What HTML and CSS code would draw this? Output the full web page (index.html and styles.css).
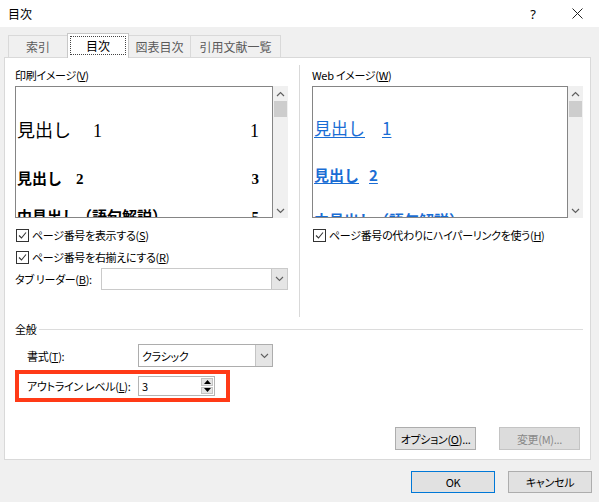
FILE: index.html
```html
<!DOCTYPE html>
<html lang="ja">
<head>
<meta charset="utf-8">
<title>目次</title>
<link rel="stylesheet" href="styles.css">
</head>
<body>
<div class="dialog">
  <div class="titlebar">
    <span class="title">目次</span>
    <span class="help">?</span>
    <span class="close"><svg width="11" height="11" viewBox="0 0 11 11"><path d="M0.5 0.5L10.5 10.5M10.5 0.5L0.5 10.5" stroke="#222" stroke-width="1" fill="none"/></svg></span>
  </div>

  <div class="tabs">
    <div class="tab t1">索引</div>
    <div class="tab t2 sel"><span class="focus">目次</span></div>
    <div class="tab t3">図表目次</div>
    <div class="tab t4">引用文献一覧</div>
  </div>

  <div class="panel">
    <div class="top">
      <div class="col col-left">
        <div class="label">印刷イメージ(<u>V</u>)</div>
        <div class="preview">
          <div class="pbox print">
            <div class="pl l1"><span>見出し<span class="gap"></span>1</span><span>1</span></div>
            <div class="pl l2"><span>見出し<span class="gap2"></span>2</span><span>3</span></div>
            <div class="pl l3"><span>中見出し（語句解説）</span><span>5</span></div>
          </div>
          <div class="sbar">
            <span class="arrow"><svg width="9" height="6" viewBox="0 0 9 6"><path d="M1 5L4.5 1.5L8 5" stroke="#606060" stroke-width="1.2" fill="none"/></svg></span>
            <span class="thumb"></span>
            <span class="sfill"></span>
            <span class="arrow"><svg width="9" height="6" viewBox="0 0 9 6"><path d="M1 1L4.5 4.5L8 1" stroke="#606060" stroke-width="1.2" fill="none"/></svg></span>
          </div>
        </div>
        <div class="chk-row first"><span class="cb"><svg width="11" height="11" viewBox="0 0 11 11"><path d="M2 5.5L4.5 8L9 2.5" stroke="#333" stroke-width="1.1" fill="none"/></svg></span>ページ番号を表示する(<u>S</u>)</div>
        <div class="chk-row"><span class="cb"><svg width="11" height="11" viewBox="0 0 11 11"><path d="M2 5.5L4.5 8L9 2.5" stroke="#333" stroke-width="1.1" fill="none"/></svg></span>ページ番号を右揃えにする(<u>R</u>)</div>
        <div class="leader-row">
          <span class="leader-label">タブ リーダー(<u>B</u>):</span>
          <span class="combo leader"><span class="val"></span><span class="dd"><svg width="9" height="6" viewBox="0 0 9 6"><path d="M1 1L4.5 4.5L8 1" stroke="#606060" stroke-width="1.1" fill="none"/></svg></span></span>
        </div>
      </div>
      <div class="vsep"></div>
      <div class="col col-right">
        <div class="label">Web イメージ(<u>W</u>)</div>
        <div class="preview">
          <div class="pbox web">
            <div class="wl l1"><span class="link">見出し<span class="gap"></span>1</span></div>
            <div class="wl l2"><span class="link">見出し<span class="gap2"></span>2</span></div>
            <div class="wl l3"><span class="link">中見出し（語句解説）</span></div>
          </div>
          <div class="sbar">
            <span class="arrow"><svg width="9" height="6" viewBox="0 0 9 6"><path d="M1 5L4.5 1.5L8 5" stroke="#606060" stroke-width="1.2" fill="none"/></svg></span>
            <span class="thumb"></span>
            <span class="sfill"></span>
            <span class="arrow"><svg width="9" height="6" viewBox="0 0 9 6"><path d="M1 1L4.5 4.5L8 1" stroke="#606060" stroke-width="1.2" fill="none"/></svg></span>
          </div>
        </div>
        <div class="chk-row first"><span class="cb"><svg width="11" height="11" viewBox="0 0 11 11"><path d="M2 5.5L4.5 8L9 2.5" stroke="#333" stroke-width="1.1" fill="none"/></svg></span>ページ番号の代わりにハイパーリンクを使う(<u>H</u>)</div>
      </div>
    </div>

    <div class="group-head"><span>全般</span><span class="line"></span></div>

    <div class="row-format">
      <span class="flabel">書式(<u>T</u>):</span>
      <span class="combo fmt"><span class="val">クラシック</span><span class="dd"><svg width="9" height="6" viewBox="0 0 9 6"><path d="M1 1L4.5 4.5L8 1" stroke="#606060" stroke-width="1.1" fill="none"/></svg></span></span>
    </div>

    <div class="highlight">
      <span class="flabel">アウトライン レベル(<u>L</u>):</span>
      <span class="spinner"><span class="val">3</span><span class="spin"><span class="sb"><svg width="7" height="4" viewBox="0 0 7 4"><path d="M0 4L3.5 0L7 4Z" fill="#000"/></svg></span><span class="sb"><svg width="7" height="4" viewBox="0 0 7 4"><path d="M0 0L3.5 4L7 0Z" fill="#000"/></svg></span></span></span>
    </div>

    <div class="actions">
      <span class="btn">オプション(<u>O</u>)...</span>
      <span class="btn disabled">変更(M)...</span>
    </div>
  </div>

  <div class="footer">
    <span class="btn fbtn ok">OK</span>
    <span class="btn fbtn">キャンセル</span>
  </div>
</div>
</body>
</html>
```

FILE: styles.css
```css
* { box-sizing: border-box; }
html, body { margin: 0; padding: 0; }
body {
  width: 599px;
  height: 502px;
  overflow: hidden;
  background: #f0f0f0;
  font-family: "Noto Sans CJK JP", "Noto Sans", sans-serif;
  font-size: 11px;
  letter-spacing: -0.3px;
  color: #000;
  font-feature-settings: "palt";
}
u { text-decoration: underline; text-underline-offset: 1px; }

.dialog { width: 599px; height: 502px; display: flex; flex-direction: column; }

.titlebar {
  height: 27px; flex-shrink: 0; background: #fff;
  display: flex; align-items: center; padding: 0 12px 0 8px;
}
.title { flex: 1; font-size: 12px; letter-spacing: 0; }
.help { width: 20px; text-align: center; margin-right: 24px; font-size: 13px; font-family: "Noto Sans", sans-serif; }
.close { width: 20px; display: flex; justify-content: center; }

.tabs { height: 30px; flex-shrink: 0; display: flex; align-items: flex-end; padding-left: 8px; }
.tab {
  height: 22px; border: 1px solid #d9d9d9; border-bottom: none;
  display: flex; align-items: center; justify-content: center;
  color: #5a5a5a; margin-left: -1px; font-size: 12px; letter-spacing: 0;
}
.t1 { width: 60px; margin-left: 0; }
.t2 { width: 62px; }
.t3 { width: 63px; }
.t4 { width: 91px; }
.tab.sel {
  height: 25px; background: #fff; color: #000; margin-bottom: -1px;
  position: relative; z-index: 1; padding: 2px 2px 3px; border-color: #c8c8c8;
}
.tab.sel .focus {
  flex: 1; align-self: stretch; border: 1px dotted #444;
  display: flex; align-items: center; justify-content: center;
}

.panel {
  margin-left: 4px; width: 587px; height: 403px; flex-shrink: 0;
  background: #fff; border: 1px solid #d9d9d9;
  display: flex; flex-direction: column;
}
.top { height: 260px; display: flex; flex-shrink: 0; }
.col-left { width: 294px; padding: 10px 11px 0 10px; }
.col-right { flex: 1; padding: 10px 7px 0 12px; }
.vsep { width: 1px; background: #d9d9d9; margin-top: 7px; height: 252px; }

.label { height: 14px; line-height: 14px; margin-bottom: 4px; white-space: nowrap; }

.preview { display: flex; height: 132px; }
.pbox { flex: 1; border: 1px solid #858585; overflow: hidden; background: #fff; letter-spacing: 0; }
.sbar { width: 15px; background: #f0f0f0; display: flex; flex-direction: column; align-items: center; }
.sbar .arrow { height: 15px; display: flex; align-items: center; justify-content: center; }
.sbar .thumb { width: 13px; height: 16px; background: #cdcdcd; }
.sbar .sfill { flex: 1; }

.print { font-family: "Liberation Serif", "Noto Sans CJK JP", serif; padding: 0 13px 0 1px; font-feature-settings: normal; }
.pl { display: flex; justify-content: space-between; white-space: nowrap; }
.print .l1 { margin-top: 33px; height: 22px; line-height: 22px; font-size: 18px; }
.print .l2 { margin-top: 27px; height: 20px; line-height: 20px; font-size: 15px; font-weight: bold; }
.print .l3 { margin-top: 19px; height: 18px; line-height: 18px; font-size: 15px; font-weight: bold; }
.gap { display: inline-block; width: 22px; }
.gap2 { display: inline-block; width: 14px; }

.web { font-family: "Noto Sans CJK JP", sans-serif; padding-left: 1px; color: #1a6dd4; font-feature-settings: normal; }
.wl { white-space: nowrap; }
.link { text-decoration: underline; text-underline-offset: 2px; text-decoration-thickness: 1px; }
.web .l1 { margin-top: 31px; height: 20px; line-height: 20px; font-size: 17px; }
.web .l1 .gap { width: 17px; }
.web .l2 { margin-top: 28px; height: 18px; line-height: 18px; font-size: 15px; font-weight: bold; }
.web .l2 .gap2 { width: 10px; }
.web .l3 { margin-top: 27px; height: 17px; line-height: 17px; font-size: 15px; font-weight: bold; }

.chk-row { height: 22px; display: flex; align-items: center; white-space: nowrap; }
.chk-row.first { margin-top: 6px; }
.cb {
  width: 13px; height: 13px; border: 1px solid #333; margin: 0 3px 0 1px;
  display: flex; align-items: center; justify-content: center; background: #fff; flex-shrink: 0;
}

.leader-row { height: 22px; display: flex; align-items: center; }
.leader-label { width: 86px; flex-shrink: 0; white-space: nowrap; }
.combo { height: 22px; display: flex; border: 1px solid #b4b4b4; background: #fff; }
.combo .val { flex: 1; padding-left: 3px; display: flex; align-items: center; }
.combo .dd {
  width: 16px; background: #e5e5e5; border-left: 1px solid #c4c4c4;
  display: flex; align-items: center; justify-content: center;
}
.leader { flex: 1; border-color: #cacaca; }

.group-head { height: 22px; display: flex; align-items: center; padding-left: 10px; flex-shrink: 0; }
.group-head .line { flex: 1; height: 1px; background: #dcdcdc; margin: 0 7px 0 3px; }

.row-format { margin-top: 4px; height: 23px; display: flex; align-items: center; padding-left: 22px; flex-shrink: 0; }
.flabel { width: 111px; flex-shrink: 0; white-space: nowrap; }
.fmt { width: 135px; height: 23px; border-color: #adadad; }
.fmt .dd { width: 17px; }

.highlight {
  margin-top: 3px; margin-left: 10px; width: 215px; height: 32px; flex-shrink: 0;
  border: 4px solid #ff3a17; display: flex; align-items: center; padding-left: 8px;
}
.spinner { width: 77px; height: 20px; display: flex; border: 1px solid #b4b4b4; background: #fff; }
.spinner .val { flex: 1; padding-left: 3px; display: flex; align-items: center; }
.spin { width: 14px; display: flex; flex-direction: column; gap: 1px; padding: 1px; }
.sb { flex: 1; background: #e5e5e5; border: 1px solid #c4c4c4; display: flex; align-items: center; justify-content: center; }

.actions { margin-top: auto; margin-bottom: 9px; display: flex; justify-content: flex-end; padding-right: 10px; gap: 23px; }
.btn {
  width: 81px; height: 23px; background: #e1e1e1; border: 1px solid #adadad;
  display: flex; align-items: center; justify-content: center; white-space: nowrap;
}
.btn.disabled { background: #dcdcdc; border-color: #c4c4c4; color: #888; }

.footer { flex: 1; display: flex; justify-content: flex-end; gap: 13px; padding: 11px 7px 0 0; }
.fbtn { width: 84px; height: 22px; }
.fbtn.ok { border-color: #0078d7; }
```
